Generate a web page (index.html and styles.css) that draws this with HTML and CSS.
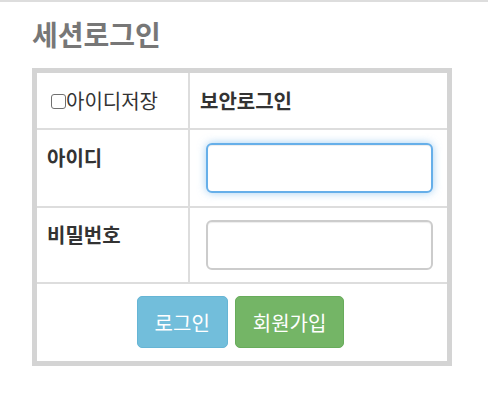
FILE: index.html
```html
<!DOCTYPE html>
<html lang="ko">
<head>
<meta charset="UTF-8" />
<meta name="viewport" content="width=device-width, initial-scale=1" />
<title>세션로그인</title>
<link rel="stylesheet" href="styles.css">
</head>
<body>
  <div class="page">
    <h2 class="title">세션로그인</h2>
    <table class="login-table">
      <tr class="row-top">
        <td class="cell-label"><label class="save-id"><input type="checkbox" />아이디저장</label></td>
        <td class="cell-field"><strong>보안로그인</strong></td>
      </tr>
      <tr class="row-input row-id">
        <th class="cell-label">아이디</th>
        <td class="cell-field"><input type="text" class="form-input is-focus" /></td>
      </tr>
      <tr class="row-input">
        <th class="cell-label">비밀번호</th>
        <td class="cell-field"><input type="password" class="form-input" /></td>
      </tr>
      <tr class="row-buttons">
        <td colspan="2">
          <div class="buttons">
            <button type="button" class="btn btn-info">로그인</button>
            <button type="button" class="btn btn-success">회원가입</button>
          </div>
        </td>
      </tr>
    </table>
  </div>
</body>
</html>
```

FILE: styles.css
```css
body {
  margin: 0;
  font-family: "Noto Sans CJK KR", "Noto Sans", sans-serif;
  color: #333;
  background: #fff;
}

.page {
  border-top: 2px solid #ddd;
  padding: 0 32px;
}

.title {
  margin: 12px 0 14px;
  font-size: 28px;
  line-height: 40px;
  font-weight: 700;
  color: #777;
}

.login-table {
  width: 420px;
  border: 5px solid #d4d4d4;
  border-collapse: separate;
  border-spacing: 0;
  font-size: 20px;
}

.login-table td,
.login-table th {
  padding: 0 10px;
  border-bottom: 2px solid #ddd;
  text-align: left;
  box-sizing: border-box;
}

.login-table tr:last-child td {
  border-bottom: none;
}

.cell-label {
  width: 153px;
  border-right: 2px solid #ddd;
  font-weight: 700;
}

.row-top td {
  height: 57px;
  vertical-align: middle;
}

.row-top .cell-label {
  font-weight: 400;
}

.save-id {
  display: flex;
  align-items: center;
}

/* plain box like the unchecked native checkbox */
.save-id input {
  appearance: none;
  -webkit-appearance: none;
  flex: none;
  box-sizing: border-box;
  width: 15px;
  height: 15px;
  margin: 1px 0 0 4px;
  border: 1.5px solid #707070;
  border-radius: 3px;
  background: #fff;
}

.row-input th,
.row-input td {
  height: 76px;
  vertical-align: top;
  padding-top: 12px;
  padding-bottom: 0;
}

.row-input.row-id th,
.row-input.row-id td {
  height: 78px;
  padding-top: 13px;
}

.row-input .cell-field {
  padding-left: 16px;
  padding-right: 14px;
}

.form-input {
  display: block;
  box-sizing: border-box;
  width: 100%;
  height: 50px;
  border: 2px solid #ccc;
  border-radius: 6px;
  box-shadow: inset 0 1px 1px rgba(0, 0, 0, 0.075);
  font-size: 16px;
  outline: none;
}

.form-input.is-focus {
  border-color: #66afe9;
  box-shadow: inset 0 1px 1px rgba(0, 0, 0, 0.075), 0 0 8px rgba(102, 175, 233, 0.6);
}

.row-buttons td {
  padding: 12px 0 13px;
}

.buttons {
  display: flex;
  justify-content: center;
  gap: 7px;
  padding-right: 3px;
}

.btn {
  height: 52px;
  padding: 0 17px;
  border: 1px solid transparent;
  border-radius: 5px;
  font-family: inherit;
  font-size: 20px;
  color: #fff;
  cursor: pointer;
}

.btn-info {
  background: #72bedb;
  border-color: #66b5d5;
}

.btn-success {
  background: #74b566;
  border-color: #68ac5b;
}
```
